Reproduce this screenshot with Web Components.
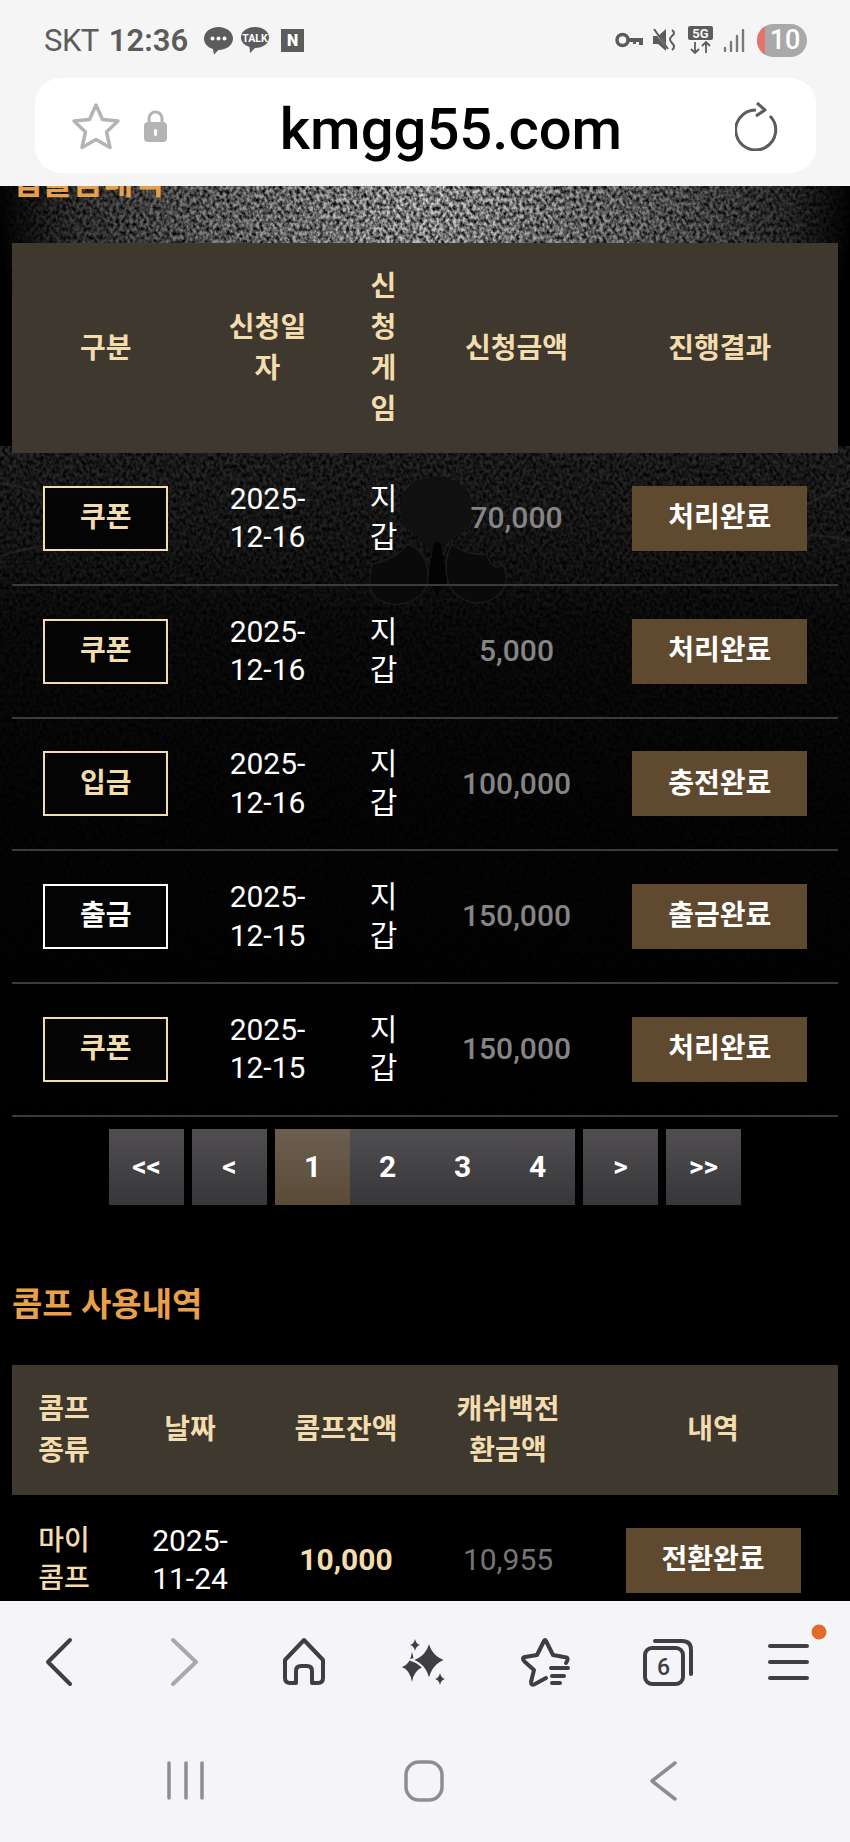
<!DOCTYPE html>
<html lang="ko">
<head>
<meta charset="utf-8">
<title>kmgg55.com</title>
<style>
  html, body { margin: 0; background: #000; }
  body { width: 850px; height: 1842px; overflow: hidden; font-family: Roboto, "Noto Sans CJK KR", sans-serif; }
</style>
</head>
<body>
<phone-screen>
  <browser-top slot="top" url="kmgg55.com"></browser-top>

  <page-backdrop slot="backdrop"></page-backdrop>

  <section-title style="margin-top:-25px">입출금내역</section-title>
  <record-table cols="187.5px 136px 96px 170px 1fr">
    <record-row head style="height:210px">
      <record-cell>구분</record-cell>
      <record-cell wrap="95">신청일자</record-cell>
      <record-cell wrap="47">신청게임</record-cell>
      <record-cell>신청금액</record-cell>
      <record-cell>진행결과</record-cell>
    </record-row>
    <record-row>
      <record-cell><type-badge>쿠폰</type-badge></record-cell>
      <record-cell wrap="95">2025-12-16</record-cell>
      <record-cell wrap="47">지갑</record-cell>
      <record-cell tone="amount">70,000</record-cell>
      <record-cell><result-tag>처리완료</result-tag></record-cell>
    </record-row>
    <record-row>
      <record-cell><type-badge>쿠폰</type-badge></record-cell>
      <record-cell wrap="95">2025-12-16</record-cell>
      <record-cell wrap="47">지갑</record-cell>
      <record-cell tone="amount">5,000</record-cell>
      <record-cell><result-tag>처리완료</result-tag></record-cell>
    </record-row>
    <record-row>
      <record-cell><type-badge>입금</type-badge></record-cell>
      <record-cell wrap="95">2025-12-16</record-cell>
      <record-cell wrap="47">지갑</record-cell>
      <record-cell tone="amount">100,000</record-cell>
      <record-cell><result-tag>충전완료</result-tag></record-cell>
    </record-row>
    <record-row>
      <record-cell><type-badge tone="out">출금</type-badge></record-cell>
      <record-cell wrap="95">2025-12-15</record-cell>
      <record-cell wrap="47">지갑</record-cell>
      <record-cell tone="amount">150,000</record-cell>
      <record-cell><result-tag>출금완료</result-tag></record-cell>
    </record-row>
    <record-row>
      <record-cell><type-badge>쿠폰</type-badge></record-cell>
      <record-cell wrap="95">2025-12-15</record-cell>
      <record-cell wrap="47">지갑</record-cell>
      <record-cell tone="amount">150,000</record-cell>
      <record-cell><result-tag>처리완료</result-tag></record-cell>
    </record-row>
  </record-table>

  <page-nav></page-nav>

  <section-title style="margin-top:78px">콤프 사용내역</section-title>
  <record-table cols="104px 148px 164px 160px 1fr">
    <record-row head style="height:130px">
      <record-cell wrap="80">콤프 종류</record-cell>
      <record-cell>날짜</record-cell>
      <record-cell>콤프잔액</record-cell>
      <record-cell wrap="120">캐쉬백전환금액</record-cell>
      <record-cell>내역</record-cell>
    </record-row>
    <record-row>
      <record-cell wrap="80" tone="cream">마이 콤프</record-cell>
      <record-cell wrap="108">2025-11-24</record-cell>
      <record-cell tone="strong">10,000</record-cell>
      <record-cell tone="thin">10,955</record-cell>
      <record-cell><result-tag>전환완료</result-tag></record-cell>
    </record-row>
  </record-table>

  <browser-bottom slot="bottom"></browser-bottom>
</phone-screen>

<script>
// 폰 화면 전체 틀
class PhoneScreen extends HTMLElement {
  constructor() {
    super();
    this.attachShadow({ mode: "open" });
    this.shadowRoot.innerHTML = `
      <style>
        :host { display: flex; flex-direction: column; width: 850px; height: 1842px; }
        .view { position: relative; height: 1415px; overflow: hidden; background: #000; }
        .flow { position: relative; display: flex; flex-direction: column; padding: 0 12px 0 12px; }
      </style>
      <slot name="top"></slot>
      <div class="view">
        <slot name="backdrop"></slot>
        <div class="flow"><slot></slot></div>
      </div>
      <slot name="bottom"></slot>
    `;
  }
}

// 상단 상태바 + 주소창
class BrowserTop extends HTMLElement {
  constructor() {
    super();
    this.attachShadow({ mode: "open" });
    const url = this.getAttribute("url") || "";
    this.shadowRoot.innerHTML = `
      <style>
        :host { display: block; height: 186px; background: #f5f5f5; color: #5c5c5c; }
        .status { display: flex; align-items: center; height: 78px; padding: 2px 43px 0 44px; box-sizing: border-box; }
        .carrier { font-size: 31px; margin-right: 10px; letter-spacing: -.5px; }
        .time { font-size: 31px; font-weight: 600; margin-right: 16px; }
        .status svg { display: block; flex: none; }
        .right { display: flex; align-items: center; margin-left: auto; }
        .pill { position: relative; display: flex; align-items: center; justify-content: center; width: 50px; height: 33px; margin-left: 12px; border-radius: 17px; overflow: hidden; background: #a9a8ab; color: #fff; font-size: 27px; font-weight: 500; padding-left: 6px; box-sizing: border-box; }
        .pill::before { content: ""; position: absolute; left: 0; top: 0; bottom: 0; width: 8px; background: #e4736a; }
        .bar { display: flex; align-items: center; height: 95px; margin: 0 34px 0 35px; padding: 0 37px 0 36px; background: #fff; border-radius: 26px; }
        .url { flex: 1; text-align: center; color: #000; font-size: 58px; font-weight: 500; line-height: 1; padding-top: 6px; }
      </style>
      <div class="status">
        <span class="carrier">SKT</span>
        <span class="time">12:36</span>
        <svg width="29" height="29" viewBox="0 0 29 29" style="margin-right:8px"><path d="M14.5 1C22.5 1 29 6 29 12.5S22.5 24 14.5 24L10 28.5 9 23C3.5 21.5 0 17.5 0 12.5 0 6 6.500 1 14.500 1Z" fill="#5c5c5c"/><circle cx="8.500" cy="12.500" r="2" fill="#fff"/><circle cx="14.500" cy="12.500" r="2" fill="#fff"/><circle cx="20.500" cy="12.500" r="2" fill="#fff"/></svg>
        <svg width="28" height="28" viewBox="0 0 28 28" style="margin-right:12px"><path d="M14 1C22 1 28 5.500 28 11.500S22 22 14 22L9 27 8.500 21C3.500 19.500 0 16 0 11.500 0 5.500 6 1 14 1Z" fill="#5c5c5c"/><text x="14" y="15.500" text-anchor="middle" font-family="Roboto, sans-serif" font-size="10.500" font-weight="700" fill="#fff">TALK</text></svg>
        <svg width="23" height="23" viewBox="0 0 23 23"><rect width="23" height="23" fill="#5c5c5c"/><text x="11.500" y="17" text-anchor="middle" font-family="Roboto, sans-serif" font-size="16" font-weight="900" fill="#fff">N</text></svg>
        <div class="right">
          <svg width="28" height="16" viewBox="0 0 28 16" style="margin-right:10px"><circle cx="7.500" cy="8" r="5.500" fill="none" stroke="#5c5c5c" stroke-width="3.500"/><path d="M13 6H28V13H24V10H21V12H18V10H13Z" fill="#5c5c5c"/></svg>
          <svg width="24" height="23" viewBox="0 0 24 23" style="margin-right:11px"><path d="M0 7H5L13 0V22L5 15H0Z" fill="#5c5c5c"/><path d="M1 1L16 21" stroke="#f5f5f5" stroke-width="2"/><path d="M1 0L15 20" stroke="#5c5c5c" stroke-width="2"/><path d="M19 1Q23 4 19 7T19 14 19 21" fill="none" stroke="#5c5c5c" stroke-width="2"/></svg>
          <svg width="25" height="28" viewBox="0 0 25 28" style="margin-right:10px"><rect width="25" height="14" rx="2" fill="#5c5c5c"/><text x="12.500" y="12" text-anchor="middle" font-family="Roboto, sans-serif" font-size="13" font-weight="700" fill="#f5f5f5">5G</text><path d="M7 16V27M3 23L7 27 11 23M18 27V16M14 20L18 16 22 20" fill="none" stroke="#5c5c5c" stroke-width="1.800"/></svg>
          <svg width="22" height="23" viewBox="0 0 22 23"><path d="M2 19V22M8 13V22M14 7V22M20 1V22" stroke="#7a7a7a" stroke-width="2.400" stroke-linecap="round"/></svg>
          <div class="pill">10</div>
        </div>
      </div>
      <div class="bar">
        <svg width="50" height="48" viewBox="0 0 50 48" style="margin-right:23px;flex:none"><path d="M25 3L31.500 17.500 47 19 35.500 30 39 45.500 25 37.500 11 45.500 14.500 30 3 19 18.500 17.500Z" fill="none" stroke="#b4b4b4" stroke-width="3.500" stroke-linejoin="round"/></svg>
        <svg width="23" height="32" viewBox="0 0 23 32" style="flex:none"><path d="M5 15V8.500A6.500 6.500 0 0 1 18 8.500V15" fill="none" stroke="#b4b4b4" stroke-width="3"/><rect x="0" y="12" width="23" height="20" rx="4" fill="#b4b4b4"/><rect x="10" y="19" width="3" height="7" rx="1.500" fill="#fff"/></svg>
        <div class="url">${url}</div>
        <svg width="44" height="50" viewBox="0 0 44 50" style="flex:none"><path d="M35 15A20 20 0 1 1 21 9" fill="none" stroke="#5c5c5c" stroke-width="3"/><path d="M22 2L30 9 21 15" fill="none" stroke="#5c5c5c" stroke-width="3" stroke-linejoin="round"/></svg>
      </div>
    `;
  }
}

// 배경 이미지 대신 그리는 노이즈 질감
class PageBackdrop extends HTMLElement {
  constructor() {
    super();
    this.attachShadow({ mode: "open" });
    this.shadowRoot.innerHTML = `
      <style>
        :host { position: absolute; left: 0; top: 0; width: 850px; height: 1415px; display: block; }
        svg { display: block; }
      </style>
      <svg width="850" height="1415" viewBox="0 0 850 1415">
        <defs>
          <filter id="grain" x="0" y="0" width="100%" height="100%" color-interpolation-filters="sRGB">
            <feTurbulence type="fractalNoise" baseFrequency=".3 .24" numOctaves="2" seed="7"/>
            <feGaussianBlur stdDeviation=".5"/>
            <feColorMatrix values="1.900 0 0 0 -.35  1.900 0 0 0 -.35  1.900 0 0 0 -.35  0 0 0 0 1"/>
          </filter>
          <radialGradient id="glow">
            <stop offset="0" stop-color="#d4d4d4"/>
            <stop offset=".5" stop-color="#888"/>
            <stop offset=".85" stop-color="#383838"/>
            <stop offset="1" stop-color="#000"/>
          </radialGradient>
          <linearGradient id="fade" x1="0" y1="0" x2="0" y2="1">
            <stop offset="0" stop-color="#2a2a2a"/>
            <stop offset=".14" stop-color="#1e1e1e"/>
            <stop offset=".26" stop-color="#0e0e0e"/>
            <stop offset=".5" stop-color="#060606"/>
            <stop offset=".75" stop-color="#030303"/>
            <stop offset="1" stop-color="#000"/>
          </linearGradient>
          <mask id="shade" maskUnits="userSpaceOnUse" x="0" y="0" width="850" height="1415">
            <ellipse cx="425" cy="0" rx="430" ry="420" fill="url(#glow)"/>
            <rect x="0" y="260" width="850" height="700" fill="url(#fade)"/>
          </mask>
        </defs>
        <rect width="850" height="1415" filter="url(#grain)" mask="url(#shade)"/>
        <g fill="none" stroke="#2e2e2e" stroke-width="2.500" opacity=".5">
          <path d="M0 297Q50 305 110 345"/>
          <path d="M0 370Q50 355 110 352"/>
          <path d="M850 300Q815 310 790 330"/>
          <path d="M850 355Q810 345 780 352"/>
        </g>
        <!-- 가운데 어두운 코 모양 -->
        <path d="M400 326C398 304 414 291 437 291 460 291 473 306 474 324 474 340 460 346 448 356L442 366 430 366 424 356C412 346 401 340 400 326Z" fill="#101010"/>
        <g fill="#0a0a0a" stroke="#222" stroke-width="1">
          <path d="M372 378C382 376 396 372 408 358 420 364 428 372 428 392 428 404 418 414 406 417 392 421 376 416 371 404 369 396 370 386 372 378Z"/>
          <path d="M503 378C496 386 488 376 487 368 474 370 462 366 452 358 446 368 445 380 447 392 450 406 462 416 476 417 490 418 503 408 506 396 507 390 505 384 503 378Z"/>
        </g>
        <path d="M434 358Q437 354 441 358L447 395 437 408 428 395Z" fill="#030303"/>
      </svg>
    `;
  }
}

// 주황색 섹션 제목
class SectionTitle extends HTMLElement {
  constructor() {
    super();
    this.attachShadow({ mode: "open" });
    this.shadowRoot.innerHTML = `
      <style>
        :host { display: block; height: 44px; margin-bottom: 38px; color: #e8a04a; font-size: 33px; font-weight: 700; line-height: 44px; }
      </style>
      <slot></slot>
    `;
  }
}

// 표: 열 너비만 정하고 행은 슬롯으로 받는다
class RecordTable extends HTMLElement {
  constructor() {
    super();
    this.attachShadow({ mode: "open" });
    this.style.setProperty("--cols", this.getAttribute("cols"));
    this.shadowRoot.innerHTML = `
      <style>
        :host { display: block; color: #fff; font-size: 30px; }
      </style>
      <slot></slot>
    `;
  }
}

class RecordRow extends HTMLElement {
  constructor() {
    super();
    this.attachShadow({ mode: "open" });
    this.shadowRoot.innerHTML = `
      <style>
        :host { display: grid; grid-template-columns: var(--cols); height: 132.75px; box-sizing: border-box; border-bottom: 2px solid #3b3b3b; line-height: 38.5px; }
        :host([head]) { background: #3e382f; border-bottom: 0; color: #f3dcae; font-size: 28px; font-weight: 700; line-height: 41px; }
      </style>
      <slot></slot>
    `;
  }
}

class RecordCell extends HTMLElement {
  constructor() {
    super();
    this.attachShadow({ mode: "open" });
    const wrap = this.getAttribute("wrap");
    this.shadowRoot.innerHTML = `
      <style>
        :host { display: flex; align-items: center; justify-content: center; min-width: 0; text-align: center; }
        .in { ${wrap ? `width: ${wrap}px;` : ""} }
        :host([tone="amount"]) { color: #858585; font-weight: 500; }
        :host([tone="strong"]) { color: #f3dcae; font-weight: 700; }
        :host([tone="thin"]) { color: #767676; }
        :host([tone="cream"]) { color: #f3dcae; font-size: 28px; font-weight: 500; }
      </style>
      <div class="in"><slot></slot></div>
    `;
  }
}

class TypeBadge extends HTMLElement {
  constructor() {
    super();
    this.attachShadow({ mode: "open" });
    this.shadowRoot.innerHTML = `
      <style>
        :host { display: flex; align-items: center; justify-content: center; width: 125px; height: 65px; box-sizing: border-box; border: 2px solid #f3dcae; background: #040404; color: #f3dcae; font-size: 28px; font-weight: 700; }
        :host([tone="out"]) { border-color: #fff; color: #fff; }
      </style>
      <slot></slot>
    `;
  }
}

class ResultTag extends HTMLElement {
  constructor() {
    super();
    this.attachShadow({ mode: "open" });
    this.shadowRoot.innerHTML = `
      <style>
        :host { display: flex; align-items: center; justify-content: center; width: 175px; height: 65px; background: #5f4a30; color: #fff; font-size: 28px; font-weight: 700; }
      </style>
      <slot></slot>
    `;
  }
}

// 페이지 번호
class PageNav extends HTMLElement {
  constructor() {
    super();
    this.attachShadow({ mode: "open" });
    const btn = (t, cls) => `<div class="b ${cls || ""}">${t}</div>`;
    this.shadowRoot.innerHTML = `
      <style>
        :host { display: flex; justify-content: center; gap: 8px; margin-top: 12px; }
        .b { display: flex; align-items: center; justify-content: center; width: 75px; height: 76px; background: linear-gradient(#504e50, #37363a); color: #fff; font-size: 30px; font-weight: 700; }
        .b.sign { font-size: 28px; }
        .b.on { background: linear-gradient(#6c5f50, #5a4b37); }
        .group { display: flex; }
      </style>
      ${btn("&lt;&lt;", "sign")}${btn("&lt;", "sign")}
      <div class="group">${btn("1", "on")}${btn("2")}${btn("3")}${btn("4")}</div>
      ${btn("&gt;", "sign")}${btn("&gt;&gt;", "sign")}
    `;
  }
}

// 하단 툴바 + 안드로이드 내비게이션
class BrowserBottom extends HTMLElement {
  constructor() {
    super();
    this.attachShadow({ mode: "open" });
    this.shadowRoot.innerHTML = `
      <style>
        :host { display: block; height: 241px; background: #f5f5f7; }
        .tools { display: grid; grid-template-columns: repeat(7, 1fr); height: 50px; padding-top: 36px; }
        .tools > div { display: flex; justify-content: center; }
        svg { display: block; overflow: visible; }
        .keys { display: grid; grid-template-columns: repeat(3, 238px); padding: 74px 0 0 67px; }
        .keys > div { display: flex; justify-content: center; }
      </style>
      <div class="tools">
        <div><svg width="60" height="50" fill="none" stroke="#3f3f43" stroke-width="4" stroke-linecap="round" stroke-linejoin="round"><path d="M39 3L17 25 39 47"/></svg></div>
        <div><svg width="60" height="50" fill="none" stroke="#a9a9ab" stroke-width="4" stroke-linecap="round" stroke-linejoin="round"><path d="M21 3L44 25 21 47"/></svg></div>
        <div><svg width="60" height="50" fill="none" stroke="#3f3f43" stroke-width="4" stroke-linejoin="round"><path d="M30 3L11 23V41Q11 46 16 46H22V34Q22 29 27 29H33Q38 29 38 34V46H44Q49 46 49 41V23Z"/></svg></div>
        <div><svg width="60" height="50" fill="#3f3f43"><path d="M17 15Q19 28 28 30 19 33 17 45 15 33 7 30 15 28 17 15Z"/><path d="M34 3Q37 19 52 23 37 27 34 45 31 27 16 23 31 19 34 3Z" stroke="#f5f5f7" stroke-width="2"/><path d="M20 2Q21 7 25 8 21 9 20 14 19 9 15 8 19 7 20 2Z"/><path d="M45 36Q46 41 50 42 46 43 45 48 44 43 40 42 44 41 45 36Z"/></svg></div>
        <div><svg width="60" height="50" fill="none" stroke="#3f3f43" stroke-width="4" stroke-linecap="round" stroke-linejoin="round"><path d="M50 26Q54 20 48 20L37 18 30 4Q29 2 28 4L21 18 9 20Q5 21 9 25L18 33 15 45Q15 49 19 47L30 41"/><path d="M35 31H52M36 39H48M36 46H44"/></svg></div>
        <div><svg width="60" height="50" fill="none" stroke="#3f3f43" stroke-width="4" stroke-linecap="round"><rect x="7" y="11" width="38" height="36" rx="7"/><path d="M17 4H44Q53 4 53 13V37"/><text x="25.500" y="38" text-anchor="middle" font-family="Roboto, sans-serif" font-size="23" font-weight="500" fill="#3f3f43" stroke="none">6</text></svg></div>
        <div><svg width="60" height="50" fill="none" stroke="#3f3f43" stroke-width="4" stroke-linecap="round"><path d="M11 9H48M11 25H48M11 41H48"/><circle cx="60" cy="-5" r="7.500" fill="#e26a2c" stroke="none"/></svg></div>
      </div>
      <div class="keys">
        <div><svg width="40" height="40" fill="none" stroke="#8e8e90" stroke-width="3.500" stroke-linecap="round"><path d="M3 2V37M20 2V37M36 2V37"/></svg></div>
        <div><svg width="40" height="40" fill="none" stroke="#8e8e90" stroke-width="3.500"><rect x="2" y="1" width="36" height="38" rx="13"/></svg></div>
        <div><svg width="40" height="40" fill="none" stroke="#8e8e90" stroke-width="3.500" stroke-linecap="round" stroke-linejoin="round"><path d="M33 2L10 20 33 38"/></svg></div>
      </div>
    `;
  }
}

customElements.define("phone-screen", PhoneScreen);
customElements.define("browser-top", BrowserTop);
customElements.define("page-backdrop", PageBackdrop);
customElements.define("section-title", SectionTitle);
customElements.define("record-table", RecordTable);
customElements.define("record-row", RecordRow);
customElements.define("record-cell", RecordCell);
customElements.define("type-badge", TypeBadge);
customElements.define("result-tag", ResultTag);
customElements.define("page-nav", PageNav);
customElements.define("browser-bottom", BrowserBottom);
</script>
</body>
</html>
